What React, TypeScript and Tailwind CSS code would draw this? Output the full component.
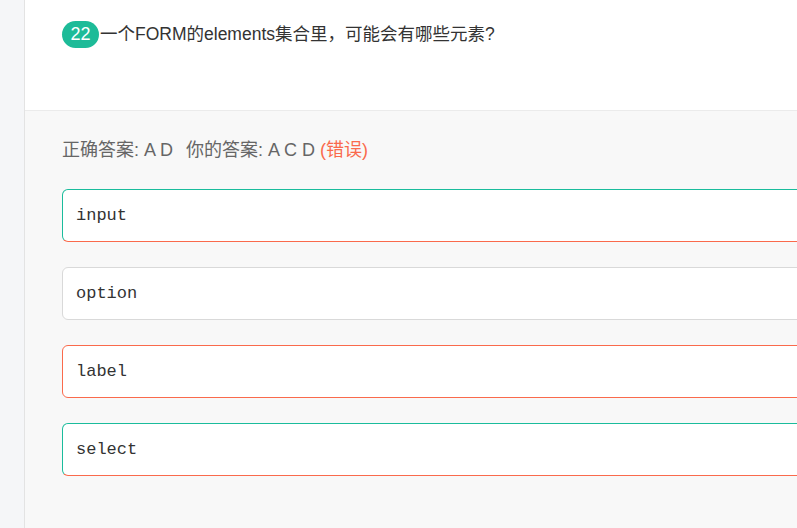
export default function App() {
  const options = [
    { text: "input", cls: "border-[#1abc9c] border-b-[#fa6a4c]" },
    { text: "option", cls: "border-[#d9d9d9]" },
    { text: "label", cls: "border-[#fa6a4c]" },
    { text: "select", cls: "border-[#1abc9c] border-b-[#fa6a4c]" },
  ];

  return (
    <div className="flex h-[528px] w-[797px] overflow-hidden bg-[#f8f8f8] font-['Liberation_Sans','Noto_Sans_CJK_SC',sans-serif]">
      <div className="w-[25px] shrink-0 border-r border-[#e3e3e3] bg-[#f5f6f8]" />
      <div className="flex min-w-0 flex-1 flex-col">
        <div className="h-[111px] shrink-0 border-b border-[#ebebeb] bg-white pl-[37px] pt-[21px]">
          <div className="flex items-center text-[17.5px] text-[#333]">
            <span className="flex h-[27px] w-[37px] items-center justify-center rounded-full bg-[#1dbb98] text-[18px] text-white">
              22
            </span>
            <span className="ml-[1px]">一个FORM的elements集合里，可能会有哪些元素?</span>
          </div>
        </div>
        <div className="pl-[37px] pt-[27px]">
          <p className="text-[18px] leading-[24px] text-[#666]">
            正确答案: A D
            <span className="ml-[13px]">你的答案: A C D</span>{" "}
            <span className="text-[#fa6a4c]">(错误)</span>
          </p>
          <div className="mt-[27px] flex w-[900px] flex-col gap-[25px]">
            {options.map((o) => (
              <div
                key={o.text}
                className={`flex h-[53px] items-center rounded-[6px] border bg-white pl-[13px] font-['Liberation_Mono',monospace] text-[17px] text-[#333] ${o.cls}`}
              >
                {o.text}
              </div>
            ))}
          </div>
        </div>
      </div>
    </div>
  );
}
